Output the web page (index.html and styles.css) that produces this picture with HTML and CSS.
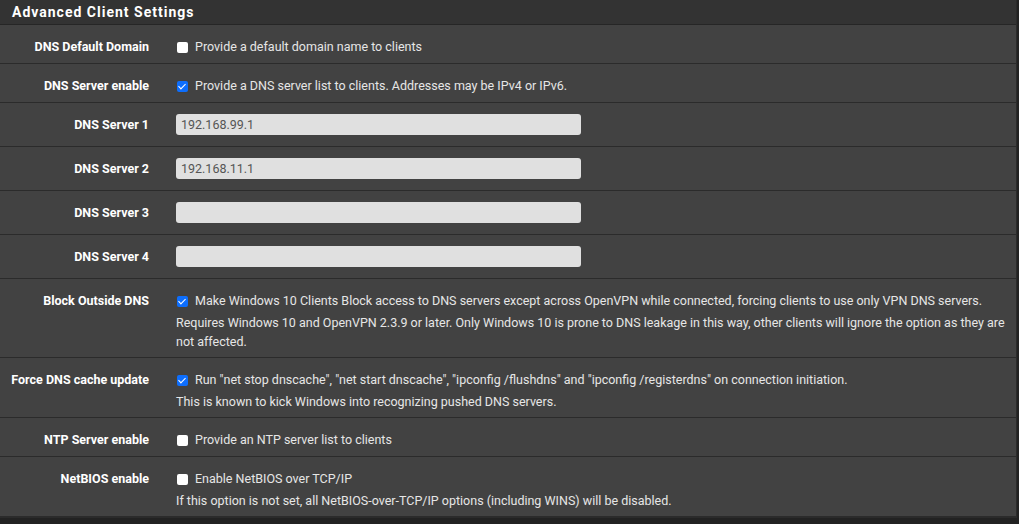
FILE: index.html
```html
<!DOCTYPE html>
<html lang="en">
<head>
  <meta charset="UTF-8">
  <title>Advanced Client Settings</title>
  <link rel="stylesheet" href="styles.css">
</head>
<body>
  <div class="panel">
    <div class="panel-heading">Advanced Client Settings</div>
    <div class="row">
      <label class="label">DNS Default Domain</label>
      <div class="field">
        <label class="check"><span class="box"></span>Provide a default domain name to clients</label>
      </div>
    </div>
    <div class="row">
      <label class="label">DNS Server enable</label>
      <div class="field">
        <label class="check"><span class="box checked"></span>Provide a DNS server list to clients. Addresses may be IPv4 or IPv6.</label>
      </div>
    </div>
    <div class="row input-row">
      <label class="label">DNS Server 1</label>
      <div class="field"><input type="text" value="192.168.99.1"></div>
    </div>
    <div class="row input-row">
      <label class="label">DNS Server 2</label>
      <div class="field"><input type="text" value="192.168.11.1"></div>
    </div>
    <div class="row input-row">
      <label class="label">DNS Server 3</label>
      <div class="field"><input type="text"></div>
    </div>
    <div class="row input-row">
      <label class="label">DNS Server 4</label>
      <div class="field"><input type="text"></div>
    </div>
    <div class="row">
      <label class="label">Block Outside DNS</label>
      <div class="field">
        <label class="check"><span class="box checked"></span>Make Windows 10 Clients Block access to DNS servers except across OpenVPN while connected, forcing clients to use only VPN DNS servers.</label>
        <p class="help">Requires Windows 10 and OpenVPN 2.3.9 or later. Only Windows 10 is prone to DNS leakage in this way, other clients will ignore the option as they are not affected.</p>
      </div>
    </div>
    <div class="row">
      <label class="label">Force DNS cache update</label>
      <div class="field">
        <label class="check"><span class="box checked"></span>Run "net stop dnscache", "net start dnscache", "ipconfig /flushdns" and "ipconfig /registerdns" on connection initiation.</label>
        <p class="help">This is known to kick Windows into recognizing pushed DNS servers.</p>
      </div>
    </div>
    <div class="row">
      <label class="label">NTP Server enable</label>
      <div class="field">
        <label class="check"><span class="box"></span>Provide an NTP server list to clients</label>
      </div>
    </div>
    <div class="row">
      <label class="label">NetBIOS enable</label>
      <div class="field">
        <label class="check"><span class="box"></span>Enable NetBIOS over TCP/IP</label>
        <p class="help">If this option is not set, all NetBIOS-over-TCP/IP options (including WINS) will be disabled.</p>
      </div>
    </div>
  </div>
</body>
</html>
```
FILE: styles.css
```css
* {
  box-sizing: border-box;
  margin: 0;
  padding: 0;
  font-family: Roboto, "Liberation Sans", sans-serif;
}
body {
  background: #222;
  width: 1019px;
  height: 524px;
  overflow: hidden;
}
.panel {
  background: #424242;
  width: 1017px;
  border-right: 1px solid #2b2b2b;
  border-bottom: 2px solid #2b2b2b;
}
.panel-heading {
  background: #333;
  color: #fff;
  font-size: 14px;
  font-weight: bold;
  letter-spacing: 1px;
  height: 25px;
  line-height: 24px;
  padding-left: 12px;
  border-bottom: 1px solid #262626;
}
.row {
  display: grid;
  grid-template-columns: 149px 1fr;
  column-gap: 27px;
  padding: 12px 0 6px;
  border-bottom: 1px solid #2b2b2b;
}
.row:last-child {
  border-bottom: none;
}
.label {
  text-align: right;
  color: #fff;
  font-size: 12.5px;
  font-weight: bold;
  line-height: 20px;
}
.field {
  color: #e6e6e6;
  font-size: 12.5px;
}
.check {
  display: flex;
  align-items: center;
  line-height: 20px;
}
.box {
  width: 11px;
  height: 11px;
  background: #fff;
  border-radius: 2px;
  margin: 0 7px 0 1px;
  flex-shrink: 0;
  position: relative;
}
.box.checked {
  background: #0d6efd;
}
.box.checked::after {
  content: "";
  position: absolute;
  left: 3px;
  top: 1px;
  width: 3px;
  height: 6px;
  border: solid #fff;
  border-width: 0 1.5px 1.5px 0;
  transform: rotate(45deg);
}
.help {
  margin-top: 2px;
  line-height: 19px;
  padding-right: 6px;
}
.input-row {
  padding: 11px 0 11px;
}
.input-row .label {
  line-height: 21px;
}
input {
  display: block;
  width: 405px;
  height: 21px;
  background: #e0e0e0;
  border: none;
  border-radius: 3px;
  padding: 0 5px;
  color: #555;
  font-size: 12.5px;
}
```
